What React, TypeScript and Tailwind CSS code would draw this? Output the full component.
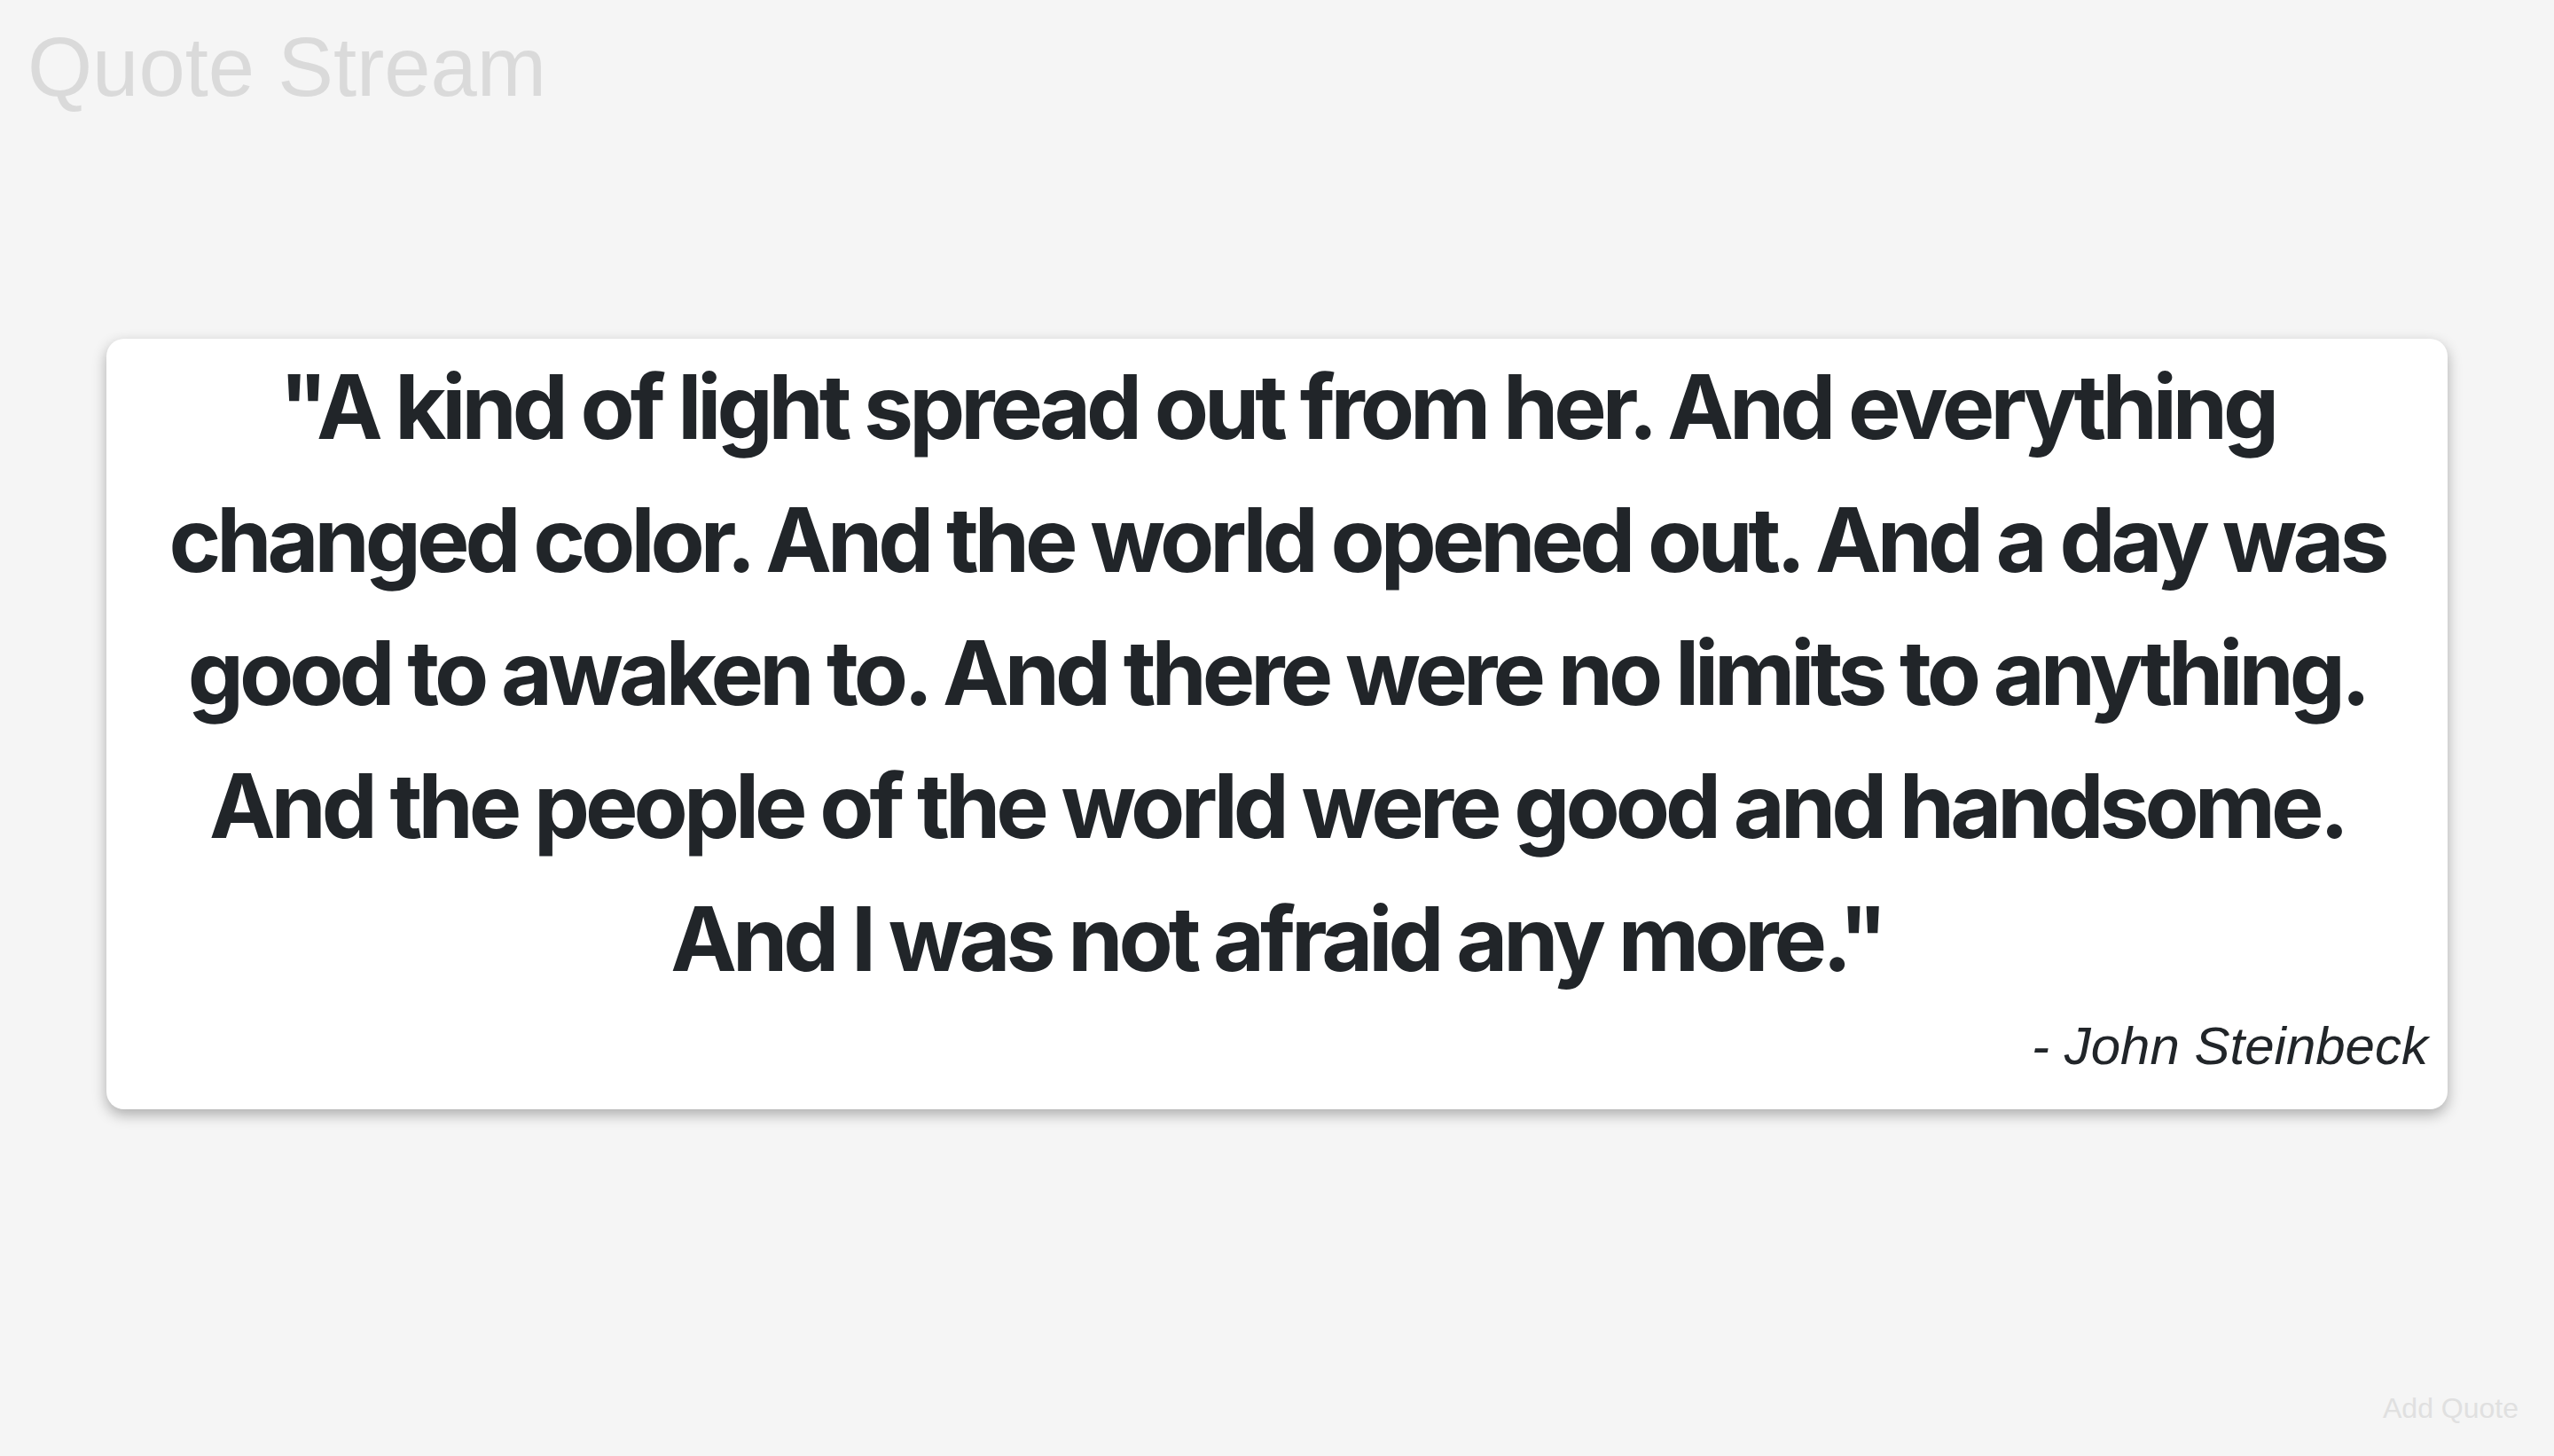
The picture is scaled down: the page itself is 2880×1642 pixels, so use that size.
export default function App() {
  return (
    <div className="flex h-[1642px] w-full flex-col bg-[#f5f5f5] font-['Liberation_Sans',Arial,sans-serif]">
      <h1 className="pl-[31px] pt-[22px] text-[94px] leading-[108px] font-normal text-[#dadada]">
        Quote Stream
      </h1>

      <div className="mx-[120px] mt-[252px] flex flex-col rounded-[20px] bg-white pb-[37px] shadow-[0_6px_16px_rgba(0,0,0,0.3)]">
        <p className="px-[20px] pt-[2px] text-center font-['Inter',sans-serif] text-[100px] leading-[150px] font-bold tracking-[-5px] text-[#212529]">
          "A kind of light spread out from her. And everything changed color. And
          the world opened out. And a day was good to awaken to. And there were
          no limits to anything. And the people of the world were good and
          handsome. And I was not afraid any more."
        </p>
        <p className="mt-[11px] pr-[22px] text-right text-[60px] italic leading-[69px] text-[#212529]">
          - John Steinbeck
        </p>
      </div>

      <div className="mt-auto flex justify-end pb-[30px] pr-[40px]">
        <button className="text-[32px] text-[#e0e0e0]">Add Quote</button>
      </div>
    </div>
  );
}
